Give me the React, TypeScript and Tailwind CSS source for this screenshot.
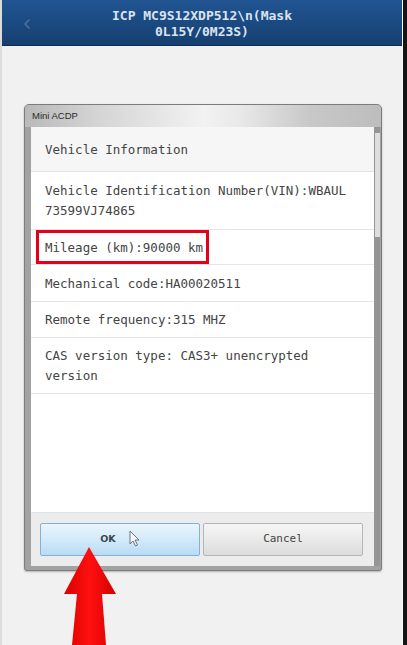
import React from 'react';

const mono = "font-['DejaVu_Sans_Mono','Liberation_Mono',monospace]";

interface InfoRow {
  lines: string[];
  height: string;
  highlight?: boolean;
}

const rows: InfoRow[] = [
  { lines: ['Vehicle Identification Number(VIN):WBAUL', '73599VJ74865'], height: 'h-[58px]' },
  { lines: ['Mileage (km):90000 km'], height: 'h-[35px]', highlight: true },
  { lines: ['Mechanical code:HA00020511'], height: 'h-[37px]' },
  { lines: ['Remote frequency:315 MHZ'], height: 'h-[36px]' },
  { lines: ['CAS version type: CAS3+ unencrypted', 'version'], height: 'h-[56px]' },
];

function Header() {
  return (
    <div className="relative h-[46px] shrink-0 bg-[linear-gradient(180deg,#215592,#1b4a82_50%,#163f70)] border-b border-[#0f2b4e] flex items-center justify-center pt-[3px]">
      <svg className="absolute left-[21px] top-[18px]" width="9" height="12" viewBox="0 0 9 12">
        <polyline points="6.5,1.5 2,6 6.5,10.5" fill="none" stroke="#4d7199" strokeWidth="1.6" />
      </svg>
      <div className={`${mono} text-[13px] leading-[16px] font-semibold text-[#dbe4ee] text-center`}>
        <div>ICP MC9S12XDP512\n(Mask</div>
        <div>0L15Y/0M23S)</div>
      </div>
    </div>
  );
}

function Cursor() {
  return (
    <svg width="11" height="17" viewBox="0 0 11 17" className="ml-[13px] -mt-[3px]">
      <path d="M1 1 L1 14 L4 11 L6.5 16 L8.5 15 L6 10 L10 10 Z" fill="#f4f8fb" stroke="#6a7580" strokeWidth="1" strokeLinejoin="round" />
    </svg>
  );
}

function Dialog() {
  return (
    <div className="w-[358px] rounded-t-[5px] rounded-b-[3px] border border-[#7c7c7c] bg-[#a2a2a2] pl-[6px] pr-[1px] pb-[4px] shadow-[0_1px_2px_rgba(0,0,0,0.25)]">
      <div className="-ml-[6px] -mr-[1px] h-[22px] rounded-t-[4px] bg-[linear-gradient(90deg,#b9b9b9,#d4d4d4_20%,#f2f2f2_50%,#e9e9e9_60%,#c8c8c8_80%,#bdbdbd)] flex items-center pl-[7px]">
        <span className="font-['Liberation_Sans',Arial,sans-serif] text-[9.5px] text-[#2a2a2a]">Mini ACDP</span>
      </div>
      <div className="flex h-[439px]">
        <div className="flex-1 bg-white flex flex-col">
          <div className={`h-[45px] shrink-0 flex items-center pl-[14px] pt-[3px] bg-[#f6f6f6] border-b border-[#e3e3e3] ${mono} text-[12.5px] text-[#444]`}>
            Vehicle Information
          </div>
          {rows.map((row) => (
            <div
              key={row.lines[0]}
              className={`relative ${row.height} shrink-0 flex flex-col justify-center pl-[14px] pt-[1px] border-b border-[#e6e6e6] ${mono} text-[12.5px] leading-[20px] text-[#444]`}
            >
              {row.lines.map((line) => (
                <div key={line} className="whitespace-pre">{line}</div>
              ))}
              {row.highlight && (
                <div className="absolute left-[5px] top-0 w-[173px] h-[34px] border-[3px] border-[#e4001b]" />
              )}
            </div>
          ))}
          <div className="flex-1" />
          <div className="h-[54px] shrink-0 bg-[#ececec] border-t border-[#e2e2e2] flex gap-[3px] pl-[9px] pr-[11px] pt-[10px]">
            <button className="w-[160px] h-[33px] rounded-[2px] border border-[#7fb3dc] bg-[linear-gradient(180deg,#eaf5fd,#d6ebfa_45%,#b8dbf4)] flex items-center justify-center">
              <span className="font-['DejaVu_Sans',sans-serif] text-[9.5px] font-bold text-[#3a4650]">OK</span>
              <Cursor />
            </button>
            <button className="w-[160px] h-[33px] rounded-[2px] border border-[#b5b5b5] bg-[linear-gradient(180deg,#f6f6f6,#ebebeb_45%,#dcdcdc)] flex items-center justify-center">
              <span className={`${mono} text-[11px] text-[#444]`}>Cancel</span>
            </button>
          </div>
        </div>
        <div className="w-[6px] bg-[#959595] flex flex-col pl-[1px]">
          <div className="mt-[6px] h-[104px] bg-[#dedede]" />
        </div>
      </div>
    </div>
  );
}

function RedArrow() {
  return (
    <svg className="absolute left-0 top-0" width="407" height="645" viewBox="0 0 407 645">
      <defs>
        <linearGradient id="arrowFill" x1="0" x2="1" y1="0" y2="0">
          <stop offset="0" stopColor="#d80000" />
          <stop offset="0.5" stopColor="#ff1010" />
          <stop offset="1" stopColor="#d40000" />
        </linearGradient>
      </defs>
      <polygon points="89,547 116,594 102,594 106,645 72,645 77,594 64,594" fill="url(#arrowFill)" />
    </svg>
  );
}

export default function App() {
  return (
    <div className="relative w-[407px] h-[645px] flex overflow-hidden bg-[#151515]">
      <div className="w-[403px] flex flex-col bg-[#f1f1f1] border-l-[2px] border-[#dcdcdc] border-r border-r-[#fafafa]">
        <Header />
        <div className="pt-[58px] pl-[22px]">
          <Dialog />
        </div>
      </div>
      <RedArrow />
    </div>
  );
}
